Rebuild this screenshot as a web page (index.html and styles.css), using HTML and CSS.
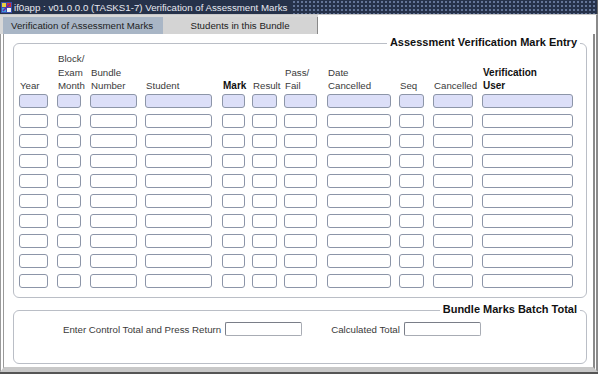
FILE: index.html
```html
<!DOCTYPE html>
<html lang="en">
<head>
  <meta charset="UTF-8" />
  <title>Verification of Assessment Marks</title>
  <link rel="stylesheet" href="styles.css">
</head>
<body>

  <div class="window">

    <!-- Title bar -->
    <div class="titlebar">
      <span class="title">
        <svg class="app-icon" width="11" height="11" viewBox="0 0 11 11">
          <rect x="0" y="0" width="11" height="11" fill="#3a4fb0"/>
          <rect x="1" y="1" width="4" height="4" fill="#e8d040"/>
          <rect x="6" y="1" width="4" height="4" fill="#d83030"/>
          <rect x="1" y="6" width="4" height="4" fill="#40a0e0"/>
          <rect x="6" y="6" width="4" height="4" fill="#f0f0f0"/>
          <path d="M2 9 L9 2" stroke="#7020a0" stroke-width="1.4"/>
        </svg>
        if0app : v01.0.0.0 (TASKS1-7) Verification of Assessment Marks
      </span>
    </div>

    <!-- Tabs -->
    <div class="tabs">
      <div class="tab active">Verification of Assessment Marks</div>
      <div class="tab">Students in this Bundle</div>
    </div>

    <div class="panel">

      <!-- Mark entry block -->
      <div class="group entry">
        <div class="legend">Assessment Verification Mark Entry</div>
        <div class="grid">
          <div class="hd">Year</div>
          <div class="hd">Block/<br>Exam<br>Month</div>
          <div class="hd">Bundle<br>Number</div>
          <div class="hd">Student</div>
          <div class="hd bold">Mark</div>
          <div class="hd">Result</div>
          <div class="hd">Pass/<br>Fail</div>
          <div class="hd">Date<br>Cancelled</div>
          <div class="hd">Seq</div>
          <div class="hd">Cancelled</div>
          <div class="hd bold">Verification<br>User</div>

          <div class="fld cur"></div><div class="fld cur"></div><div class="fld cur"></div><div class="fld cur"></div><div class="fld cur"></div><div class="fld cur"></div><div class="fld cur"></div><div class="fld cur"></div><div class="fld cur"></div><div class="fld cur"></div><div class="fld cur"></div>
          <div class="fld"></div><div class="fld"></div><div class="fld"></div><div class="fld"></div><div class="fld"></div><div class="fld"></div><div class="fld"></div><div class="fld"></div><div class="fld"></div><div class="fld"></div><div class="fld"></div>
          <div class="fld"></div><div class="fld"></div><div class="fld"></div><div class="fld"></div><div class="fld"></div><div class="fld"></div><div class="fld"></div><div class="fld"></div><div class="fld"></div><div class="fld"></div><div class="fld"></div>
          <div class="fld"></div><div class="fld"></div><div class="fld"></div><div class="fld"></div><div class="fld"></div><div class="fld"></div><div class="fld"></div><div class="fld"></div><div class="fld"></div><div class="fld"></div><div class="fld"></div>
          <div class="fld"></div><div class="fld"></div><div class="fld"></div><div class="fld"></div><div class="fld"></div><div class="fld"></div><div class="fld"></div><div class="fld"></div><div class="fld"></div><div class="fld"></div><div class="fld"></div>
          <div class="fld"></div><div class="fld"></div><div class="fld"></div><div class="fld"></div><div class="fld"></div><div class="fld"></div><div class="fld"></div><div class="fld"></div><div class="fld"></div><div class="fld"></div><div class="fld"></div>
          <div class="fld"></div><div class="fld"></div><div class="fld"></div><div class="fld"></div><div class="fld"></div><div class="fld"></div><div class="fld"></div><div class="fld"></div><div class="fld"></div><div class="fld"></div><div class="fld"></div>
          <div class="fld"></div><div class="fld"></div><div class="fld"></div><div class="fld"></div><div class="fld"></div><div class="fld"></div><div class="fld"></div><div class="fld"></div><div class="fld"></div><div class="fld"></div><div class="fld"></div>
          <div class="fld"></div><div class="fld"></div><div class="fld"></div><div class="fld"></div><div class="fld"></div><div class="fld"></div><div class="fld"></div><div class="fld"></div><div class="fld"></div><div class="fld"></div><div class="fld"></div>
          <div class="fld"></div><div class="fld"></div><div class="fld"></div><div class="fld"></div><div class="fld"></div><div class="fld"></div><div class="fld"></div><div class="fld"></div><div class="fld"></div><div class="fld"></div><div class="fld"></div>
        </div>
      </div>

      <!-- Batch total block -->
      <div class="group batch">
        <div class="legend">Bundle Marks Batch Total</div>
        <div class="batch-row">
          <label for="control-total">Enter Control Total and Press Return</label>
          <div class="box" id="control-total"></div>
          <label class="calc-label" for="calc-total">Calculated Total</label>
          <div class="box" id="calc-total"></div>
        </div>
      </div>

    </div>
  </div>

</body>
</html>
```

FILE: styles.css
```css
/* Base */
* {
  box-sizing: border-box;
  margin: 0;
  padding: 0;
}

body {
  font-family: 'Liberation Sans', Arial, sans-serif;
  font-size: 9.7px;
  color: #3a3a3a;
  background-color: #fff;
}

.window {
  width: 598px;
  height: 379px;
  background-color: #fff;
}

/* Title bar */
.titlebar {
  height: 14px;
  background-color: #26324a;
  background-image: radial-gradient(#66779a 0.7px, transparent 0.9px);
  background-size: 4px 4px;
  border-right: 1px solid #666;
}

.title {
  display: inline-flex;
  align-items: center;
  gap: 2px;
  height: 14px;
  padding: 0 4px 0 1px;
  background-color: #26324a;
  color: #e6e8f0;
  font-size: 9.7px;
}

.app-icon {
  flex-shrink: 0;
}

/* Tabs */
.tabs {
  display: flex;
  height: 20px;
  padding: 2px 0 0 3px;
  background: linear-gradient(to right, #d8d8d8 318px, #fff 318px);
  border-top: 1px solid #c8c8c8;
  border-right: 2px solid #8a8a8a;
}

.tab {
  height: 17px;
  line-height: 17px;
  padding: 0 8px;
  color: #222;
}

.tab.active {
  width: 160px;
  background-color: #a9b6c6;
}

.tab:not(.active) {
  width: 155px;
  text-align: center;
  background-color: #d4d4d4;
  border-right: 1px solid #888;
}

/* Main panel */
.panel {
  height: 338px;
  padding: 9px 0 0 9px;
  border-left: 4px double #9a9a9a;
  border-right: 5px double #8a8a8a;
  border-bottom: 5px solid #c8c8c8;
  box-shadow: 0 2px 0 #555;
}

.group {
  position: relative;
  width: 574px;
  border: 1px solid #babec6;
  border-radius: 6px;
}

.legend {
  position: absolute;
  top: -8px;
  right: 6px;
  padding: 0 3px;
  background-color: #fff;
  color: #111;
  font-size: 11px;
  font-weight: bold;
}

/* Entry grid */
.entry {
  height: 255px;
  padding: 8px 0 0 5px;
}

.grid {
  display: grid;
  grid-template-columns: 38px 33px 55px 77px 30px 32px 43px 72px 34px 49px 91px;
  row-gap: 6px;
}

.hd {
  align-self: end;
  line-height: 13.5px;
  margin-bottom: -5px;
  padding-left: 1px;
  white-space: nowrap;
}

.hd.bold {
  font-weight: bold;
  color: #111;
  font-size: 10px;
}

.fld {
  height: 14px;
  border: 1px solid #8c95a8;
  border-radius: 3px;
  background-color: #fff;
}

.fld.cur {
  background-color: #dcdff8;
}

.grid .fld:nth-child(11n+1) { width: 29px; }
.grid .fld:nth-child(11n+2) { width: 24px; }
.grid .fld:nth-child(11n+3) { width: 47px; }
.grid .fld:nth-child(11n+4) { width: 67px; }
.grid .fld:nth-child(11n+5) { width: 23px; }
.grid .fld:nth-child(11n+6) { width: 25px; }
.grid .fld:nth-child(11n+7) { width: 33px; }
.grid .fld:nth-child(11n+8) { width: 64px; }
.grid .fld:nth-child(11n+9) { width: 25px; }
.grid .fld:nth-child(11n+10) { width: 40px; }
.grid .fld:nth-child(11n) { width: 91px; }

/* Batch total */
.batch {
  height: 54px;
  margin-top: 12px;
  padding: 11px 0 0 49px;
}

.batch-row {
  display: flex;
  align-items: center;
}

.batch-row label {
  margin-right: 4px;
}

.calc-label {
  margin-left: 29px;
}

.box {
  width: 77px;
  height: 14px;
  border: 1px solid #a8acb4;
  border-top-color: #7a7e88;
  border-left-color: #7a7e88;
  border-radius: 2px;
}
```
